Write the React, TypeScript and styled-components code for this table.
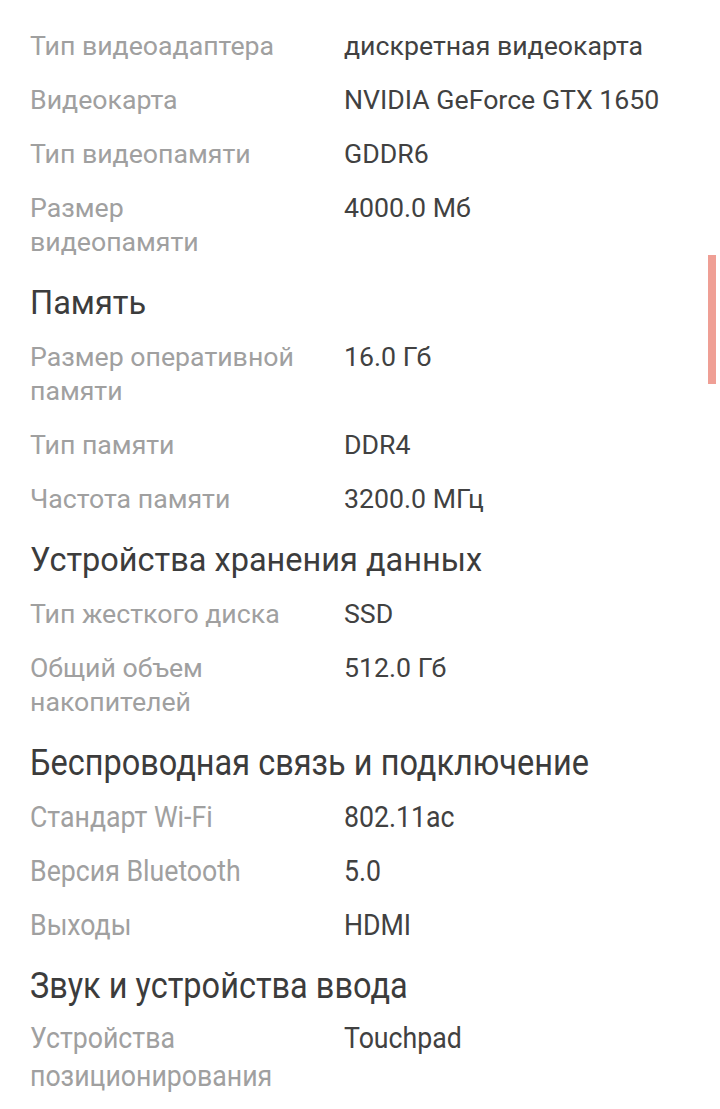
import React from "react";
import styled, { createGlobalStyle, css } from "styled-components";

const Global = createGlobalStyle`
  html, body { margin: 0; padding: 0; background: #ffffff; }
  body { font-family: Roboto, "Noto Sans", sans-serif; -webkit-font-smoothing: antialiased; }
`;

const Page = styled.div`
  position: relative;
  width: 720px;
  height: 1109px;
  overflow: hidden;
  background: #fff;
  box-sizing: border-box;
  padding: 19px 0 0 30px;
`;

const Section = styled.section`
  display: flex;
  flex-direction: column;
`;

const tallText = css<{ $tall?: boolean }>`
  ${(p) =>
    p.$tall &&
    css`
      transform: scaleY(1.12);
      transform-origin: 50% 55%;
    `}
`;

const Heading = styled.h2<{ $tall?: boolean }>`
  margin: 0;
  padding: 14px 0 7px;
  font-size: 32.5px;
  line-height: 40px;
  font-weight: 400;
  color: #3c3c3c;
  ${tallText}
`;

const Row = styled.div`
  display: grid;
  grid-template-columns: 314px 1fr;
  padding: 10px 0;
  font-size: 26.7px;
  line-height: 34px;
`;

const Label = styled.div<{ $tall?: boolean }>`
  color: #a0a0a0;
  max-width: 267px;
  ${tallText}
`;

const Value = styled.div<{ $tall?: boolean }>`
  color: #414141;
  ${tallText}
`;

const ScrollThumb = styled.div`
  position: absolute;
  right: 4px;
  top: 255px;
  width: 8px;
  height: 129px;
  background: #ef9f95;
`;

type Item = [string, string];
type Group = { title?: string; items: Item[]; tall?: boolean };

const groups: Group[] = [
  {
    items: [
      ["Тип видеоадаптера", "дискретная видеокарта"],
      ["Видеокарта", "NVIDIA GeForce GTX 1650"],
      ["Тип видеопамяти", "GDDR6"],
      ["Размер видеопамяти", "4000.0 Мб"],
    ],
  },
  {
    title: "Память",
    items: [
      ["Размер оперативной памяти", "16.0 Гб"],
      ["Тип памяти", "DDR4"],
      ["Частота памяти", "3200.0 МГц"],
    ],
  },
  {
    title: "Устройства хранения данных",
    items: [
      ["Тип жесткого диска", "SSD"],
      ["Общий объем накопителей", "512.0 Гб"],
    ],
  },
  {
    title: "Беспроводная связь и подключение",
    tall: true,
    items: [
      ["Стандарт Wi-Fi", "802.11ac"],
      ["Версия Bluetooth", "5.0"],
      ["Выходы", "HDMI"],
    ],
  },
  {
    title: "Звук и устройства ввода",
    tall: true,
    items: [["Устройства позиционирования", "Touchpad"]],
  },
];

export default function App() {
  return (
    <>
      <Global />
      <Page>
        {groups.map((g, i) => (
          <Section key={i}>
            {g.title && <Heading $tall={g.tall}>{g.title}</Heading>}
            {g.items.map(([l, v]) => (
              <Row key={l}>
                <Label $tall={g.tall}>{l}</Label>
                <Value $tall={g.tall}>{v}</Value>
              </Row>
            ))}
          </Section>
        ))}
        <ScrollThumb />
      </Page>
    </>
  );
}
